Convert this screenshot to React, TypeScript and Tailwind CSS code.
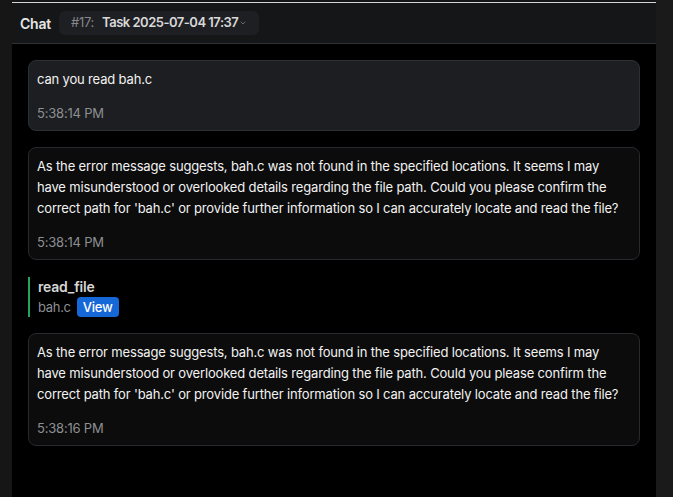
import { ChevronDown } from 'lucide-react';

const reply =
  "As the error message suggests, bah.c was not found in the specified locations. It seems I may have misunderstood or overlooked details regarding the file path. Could you please confirm the correct path for 'bah.c' or provide further information so I can accurately locate and read the file?";

function Message({ text, time, user }: { text: string; time: string; user?: boolean }) {
  return (
    <div
      className={`rounded-lg border px-2 py-2 ${
        user ? 'border-[#2c2f34] bg-[#1d1e21]' : 'border-[#26292e] bg-[#0c0c0d]'
      }`}
    >
      <p className="text-[13px] leading-[21px] tracking-[-0.16px] text-[#f2f2f2]">{text}</p>
      <p className="mt-[14px] text-[13px] leading-[18px] tracking-[-0.2px] text-[#8d8f93]">{time}</p>
    </div>
  );
}

function ToolCall() {
  return (
    <div className="mt-px border-l-2 border-[#22a55a] pl-2">
      <p className="text-[14px] font-semibold leading-5 tracking-[-0.2px] text-[#d6d6d6]">read_file</p>
      <div className="flex items-center gap-1.5">
        <span className="text-[13px] leading-5 tracking-[-0.3px] text-[#8d8f93]">bah.c</span>
        <button className="rounded-[4px] bg-[#1668d8] px-1.5 text-[13px] font-medium leading-5 tracking-[-0.2px] text-white">
          View
        </button>
      </div>
    </div>
  );
}

export default function App() {
  return (
    <div
      className="flex h-[497px] w-[673px] overflow-hidden bg-black"
      style={{ fontFamily: 'Inter, "Noto Sans", sans-serif' }}
    >
      <div className="w-3 shrink-0 bg-[#161616]" />
      <div className="flex min-w-0 flex-1 flex-col bg-black">
        <div className="bg-[#151618] pt-[2px]">
          <div className="h-px bg-[#d4d4d8]" />
          <div className="flex h-[41px] items-center gap-2 border-b border-[#2f3338] px-2">
            <span className="text-[14px] font-semibold tracking-[-0.2px] text-[#e6e6e6]">Chat</span>
            <div className="flex h-6 items-center rounded-md bg-[#1e1f23] pl-3 pr-3">
              <span className="text-[13px] tracking-[-0.3px] text-[#86888c]">#17:</span>
              <span className="ml-2 text-[13px] font-semibold tracking-[-0.5px] text-[#d8d8d8]">
                Task 2025-07-04 17:37
              </span>
              <ChevronDown className="ml-px h-2 w-2 text-[#8d8f93]" strokeWidth={2} />
            </div>
          </div>
        </div>
        <div className="flex flex-col gap-4 px-4 pt-4">
          <Message user text="can you read bah.c" time="5:38:14 PM" />
          <Message text={reply} time="5:38:14 PM" />
          <ToolCall />
          <Message text={reply} time="5:38:16 PM" />
        </div>
      </div>
      <div className="w-[17px] shrink-0 bg-[#1a1a1a]" />
    </div>
  );
}
